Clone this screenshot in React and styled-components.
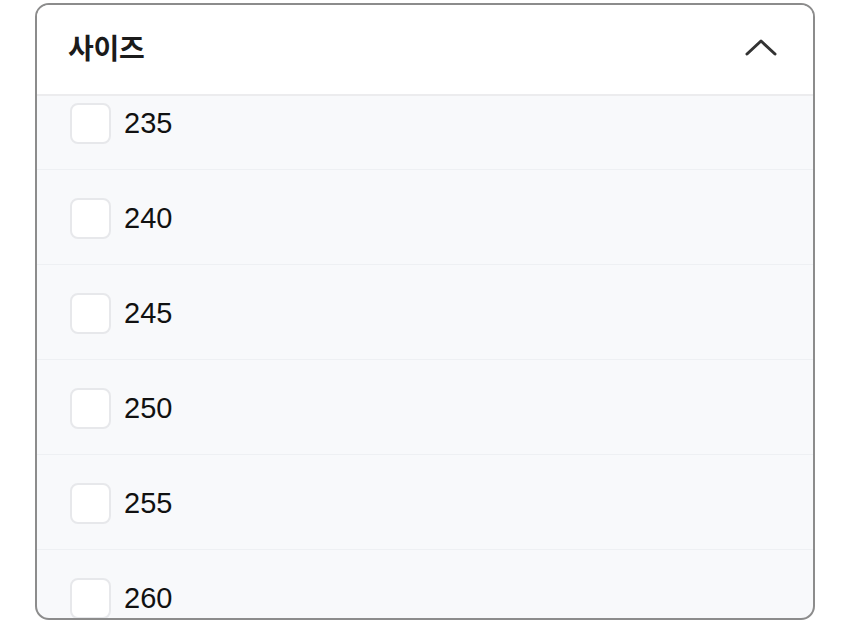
import React, { useEffect, useRef, useState } from 'react';
import styled, { createGlobalStyle } from 'styled-components';

const GlobalStyle = createGlobalStyle`
  body {
    margin: 0;
    background: #ffffff;
    font-family: "Liberation Sans", "Noto Sans CJK KR", sans-serif;
  }
`;

const Page = styled.div`
  padding: 3px 35px 0 35px;
`;

const Panel = styled.div`
  width: 780px;
  height: 617px;
  box-sizing: border-box;
  border: 2px solid #8c8c8c;
  border-radius: 14px;
  overflow: hidden;
  display: flex;
  flex-direction: column;
  background: #f8f9fb;
`;

const Header = styled.button`
  flex: none;
  height: 91px;
  box-sizing: border-box;
  display: flex;
  align-items: center;
  justify-content: space-between;
  padding: 0 36px 5px 31px;
  background: #ffffff;
  border: none;
  border-bottom: 2px solid #ececee;
  cursor: pointer;
`;

const Title = styled.span`
  font-family: "Noto Sans CJK KR", sans-serif;
  font-size: 28px;
  font-weight: 700;
  color: #1b1b1b;
  letter-spacing: -0.3px;
`;

const List = styled.div`
  flex: 1;
  overflow: hidden;
`;

const Row = styled.label`
  height: 95px;
  box-sizing: border-box;
  display: flex;
  align-items: center;
  gap: 13px;
  padding-left: 33px;
  padding-top: 2px;
  border-bottom: 1px solid #eef0f3;
  cursor: pointer;
`;

const Box = styled.span`
  width: 41px;
  height: 41px;
  box-sizing: border-box;
  border: 2px solid #e7e8eb;
  border-radius: 8px;
  background: ${(props) => (props.checked ? '#222' : '#ffffff')};
`;

const Size = styled.span`
  font-size: 29px;
  color: #111111;
`;

const sizes = [235, 240, 245, 250, 255, 260, 265, 270];

function ChevronUp() {
  return (
    <svg width="32" height="18" viewBox="0 0 32 18" fill="none">
      <path d="M2 16 L16 3 L30 16" stroke="#333" strokeWidth="3" strokeLinecap="round" strokeLinejoin="round" />
    </svg>
  );
}

function App() {
  const [checked, setChecked] = useState({});
  const listRef = useRef(null);

  useEffect(() => {
    if (listRef.current) listRef.current.scrollTop = 21;
  }, []);

  return (
    <Page>
      <GlobalStyle />
      <Panel>
        <Header>
          <Title>사이즈</Title>
          <ChevronUp />
        </Header>
        <List ref={listRef}>
          {sizes.map((s) => (
            <Row key={s} onClick={() => setChecked({ ...checked, [s]: !checked[s] })}>
              <Box checked={checked[s]} />
              <Size>{s}</Size>
            </Row>
          ))}
        </List>
      </Panel>
    </Page>
  );
}

export default App;
